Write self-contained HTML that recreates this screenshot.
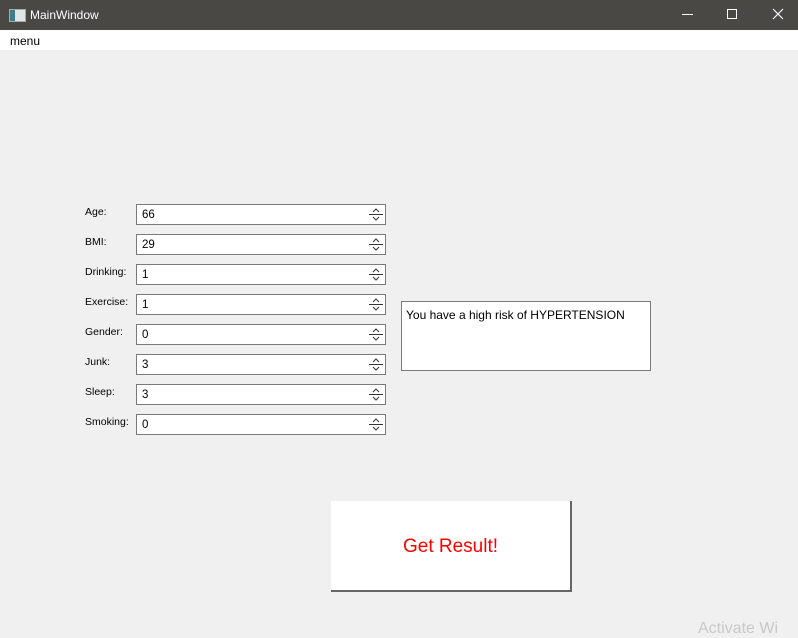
<!DOCTYPE html>
<html><head><meta charset="utf-8"><style>
body{margin:0;width:798px;height:629px;background:#f0f0f0;font-family:"Liberation Sans",sans-serif;position:relative;overflow:hidden}
.tb{position:absolute;left:0;top:0;width:798px;height:30px;background:#4a4845;color:#fff;font-size:12px}
.menu{position:absolute;left:0;top:30px;width:798px;height:20px;background:#fff;font-size:12px}
.a{position:absolute}
.lbl{position:absolute;left:85px;font-size:10.5px;color:#000}
.sp{position:absolute;left:136px;width:248px;height:19px;background:#fff;border:1px solid #7a7a7a;font-size:11.5px}
.sp span{position:absolute;left:5px;top:4px}
.arr{position:absolute;right:2px;top:1px;width:14px;height:17px}
</style></head><body>
<div class="tb">
<div class="a" style="left:9px;top:9px;width:15px;height:11px;background:#dfe6e6;border:1px solid #aaa"><div style="width:5px;height:11px;background:#3f7b8c"></div></div>
<div class="a" style="left:30px;top:8px">MainWindow</div>
<div class="a" style="left:682px;top:14px;width:11px;height:1px;background:#fff"></div>
<div class="a" style="left:727px;top:9px;width:8px;height:8px;border:1px solid #fff"></div>
<svg class="a" style="left:772px;top:8px" width="12" height="12"><path d="M1 1L11 11M11 1L1 11" stroke="#fff" stroke-width="1.2"/></svg>
</div>
<div class="menu"><span class="a" style="left:10px;top:4px">menu</span></div>

<div class="lbl" style="top:206px">Age:</div>
<div class="lbl" style="top:236px">BMI:</div>
<div class="lbl" style="top:266px">Drinking:</div>
<div class="lbl" style="top:296px">Exercise:</div>
<div class="lbl" style="top:326px">Gender:</div>
<div class="lbl" style="top:356px">Junk:</div>
<div class="lbl" style="top:386px">Sleep:</div>
<div class="lbl" style="top:416px">Smoking:</div>

<div class="sp" style="top:204px"><span>66</span><svg class="arr"><path d="M0 8.5H14M4 6L7 3L10 6M4 11L7 14L10 11" stroke="#333" fill="none"/></svg></div>
<div class="sp" style="top:234px"><span>29</span><svg class="arr"><path d="M0 8.5H14M4 6L7 3L10 6M4 11L7 14L10 11" stroke="#333" fill="none"/></svg></div>
<div class="sp" style="top:264px"><span>1</span><svg class="arr"><path d="M0 8.5H14M4 6L7 3L10 6M4 11L7 14L10 11" stroke="#333" fill="none"/></svg></div>
<div class="sp" style="top:294px"><span>1</span><svg class="arr"><path d="M0 8.5H14M4 6L7 3L10 6M4 11L7 14L10 11" stroke="#333" fill="none"/></svg></div>
<div class="sp" style="top:324px"><span>0</span><svg class="arr"><path d="M0 8.5H14M4 6L7 3L10 6M4 11L7 14L10 11" stroke="#333" fill="none"/></svg></div>
<div class="sp" style="top:354px"><span>3</span><svg class="arr"><path d="M0 8.5H14M4 6L7 3L10 6M4 11L7 14L10 11" stroke="#333" fill="none"/></svg></div>
<div class="sp" style="top:384px"><span>3</span><svg class="arr"><path d="M0 8.5H14M4 6L7 3L10 6M4 11L7 14L10 11" stroke="#333" fill="none"/></svg></div>
<div class="sp" style="top:414px"><span>0</span><svg class="arr"><path d="M0 8.5H14M4 6L7 3L10 6M4 11L7 14L10 11" stroke="#333" fill="none"/></svg></div>

<div class="a" style="left:401px;top:301px;width:248px;height:68px;background:#fff;border:1px solid #7a7a7a;font-size:12px"><span class="a" style="left:4px;top:6px">You have a high risk of HYPERTENSION</span></div>

<div class="a" style="left:331px;top:501px;width:239px;height:89px;background:#fff;border-right:2px solid #666;border-bottom:2px solid #666;color:#f00;font-size:19px;text-align:center;line-height:91px">Get Result!</div>

<div class="a" style="left:698px;top:620px;color:#c8c8c8;font-size:16px">Activate Wi</div>
</body></html>
